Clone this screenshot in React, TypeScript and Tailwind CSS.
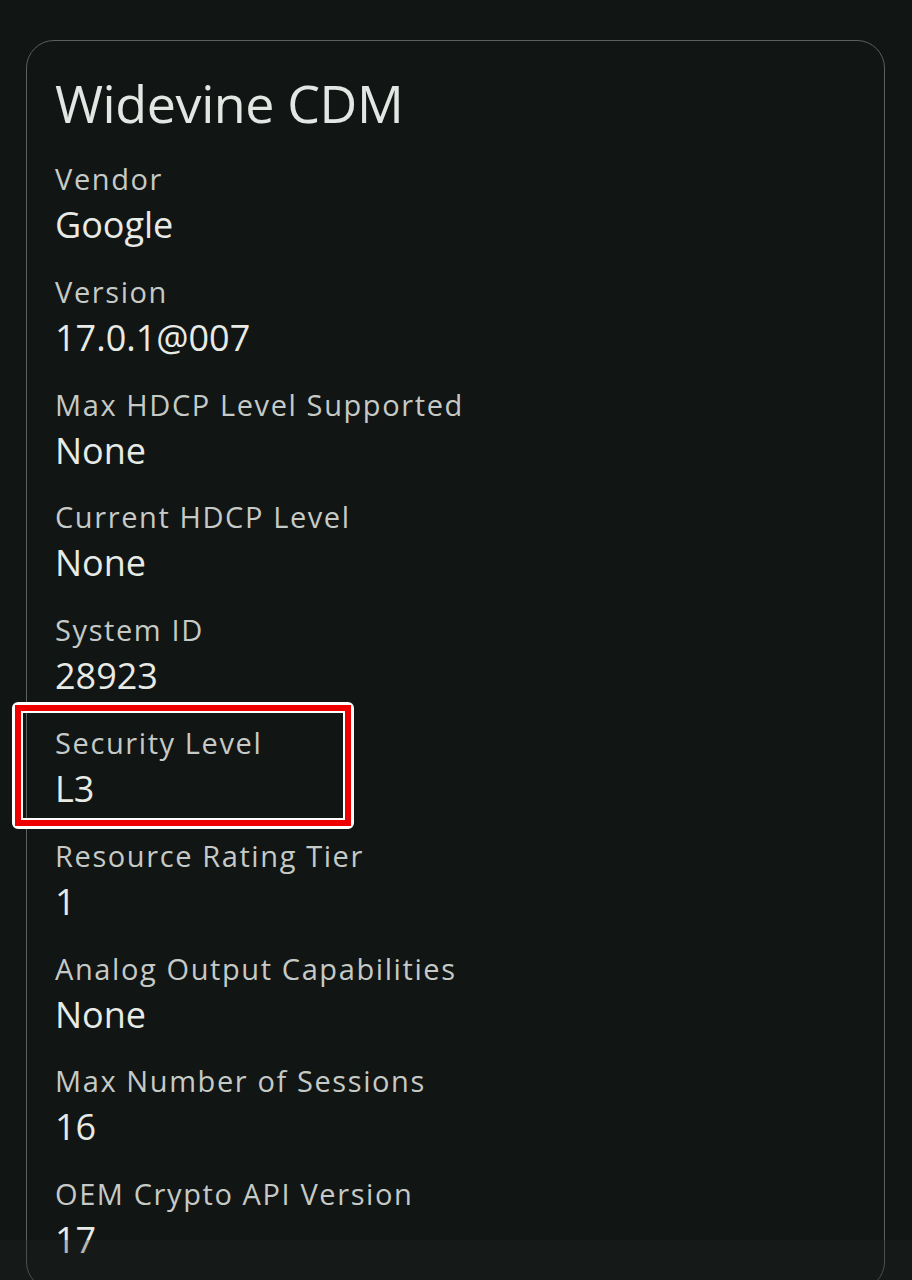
const rows = [
  { label: "Vendor", value: "Google" },
  { label: "Version", value: "17.0.1@007" },
  { label: "Max HDCP Level Supported", value: "None" },
  { label: "Current HDCP Level", value: "None" },
  { label: "System ID", value: "28923" },
  { label: "Security Level", value: "L3", marked: true },
  { label: "Resource Rating Tier", value: "1" },
  { label: "Analog Output Capabilities", value: "None" },
  { label: "Max Number of Sessions", value: "16" },
  { label: "OEM Crypto API Version", value: "17" },
];

export default function App() {
  return (
    <div
      className="relative h-[1280px] overflow-hidden bg-[#111514] pt-[40px]"
      style={{ fontFamily: '"Open Sans", "Noto Sans", sans-serif' }}
    >
      {/* Card */}
      <div className="ml-[26px] h-[1250px] w-[859px] rounded-[28px] border-[1.5px] border-[#5a615e] bg-[#111514] pl-[28px] pt-[30px]">
        <h1 className="text-[52px] leading-[64px] tracking-[-0.4px] text-[#e3e6e2]">Widevine CDM</h1>

        <div className="mt-[24px] flex flex-col gap-[24px]">
          {rows.map((row) => (
            <div key={row.label} className="relative">
              <p className="text-[29px] leading-[40px] tracking-[1.6px] text-[#c6cac6]">
                {row.label}
              </p>
              <p className="mt-[3px] text-[36px] leading-[45.8px] text-[#e8eae6]">{row.value}</p>

              {/* Highlight annotation */}
              {row.marked && (
                <div className="absolute left-[-43px] top-[-21px] h-[127px] w-[342px] rounded-[6px] border-[3px] border-white">
                  <div className="h-full w-full border-[6px] border-[#ee0000]">
                    <div className="h-full w-full border-2 border-white" />
                  </div>
                </div>
              )}
            </div>
          ))}
        </div>
      </div>

      {/* Bottom navigation scrim */}
      <div className="absolute bottom-0 left-0 right-0 h-[40px] bg-[rgba(34,38,37,0.28)]" />
    </div>
  );
}
